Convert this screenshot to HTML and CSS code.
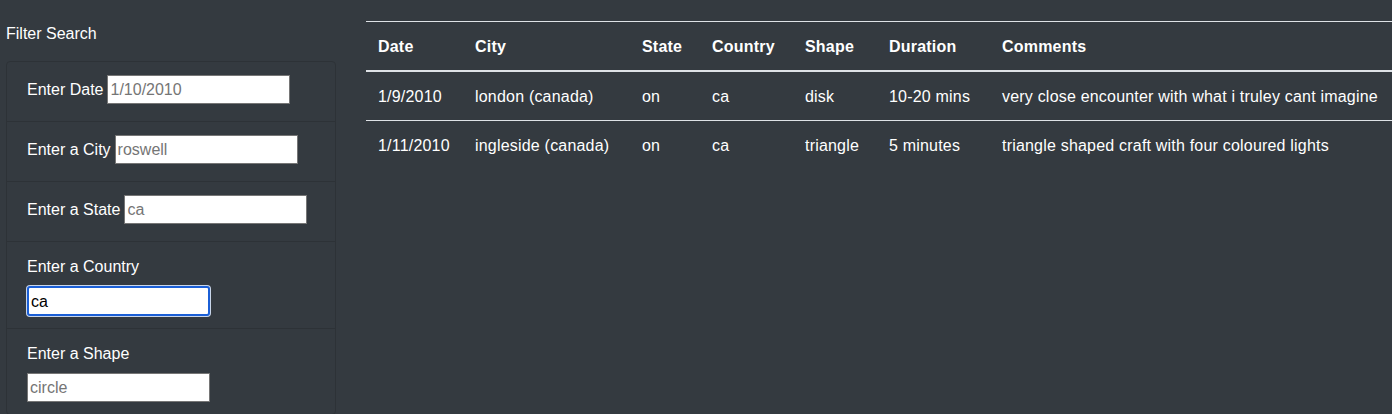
FILE: index.html
```html
<!DOCTYPE html>
<html lang="en">
<head>
<meta charset="utf-8">
<title>UFO Sightings</title>
<link rel="stylesheet" href="styles.css">
</head>
<body>
<div class="page">
  <aside class="sidebar">
    <p class="filter-title">Filter Search</p>
    <ul class="filters">
      <li class="filter inline">
        <label class="filter-label" for="datetime">Enter Date</label>
        <input class="filter-input" id="datetime" type="text" placeholder="1/10/2010">
      </li>
      <li class="filter inline">
        <label class="filter-label" for="city">Enter a City</label>
        <input class="filter-input" id="city" type="text" placeholder="roswell">
      </li>
      <li class="filter inline">
        <label class="filter-label" for="state">Enter a State</label>
        <input class="filter-input" id="state" type="text" placeholder="ca">
      </li>
      <li class="filter stacked">
        <label class="filter-label" for="country">Enter a Country</label>
        <input class="filter-input focused" id="country" type="text" value="ca">
      </li>
      <li class="filter stacked">
        <label class="filter-label" for="shape">Enter a Shape</label>
        <input class="filter-input" id="shape" type="text" placeholder="circle">
      </li>
    </ul>
  </aside>
  <main class="results">
    <table class="ufo-table">
      <colgroup>
        <col class="c-date"><col class="c-city"><col class="c-state"><col class="c-country"><col class="c-shape"><col class="c-duration"><col class="c-comments">
      </colgroup>
      <thead>
        <tr>
          <th>Date</th><th>City</th><th>State</th><th>Country</th><th>Shape</th><th>Duration</th><th>Comments</th>
        </tr>
      </thead>
      <tbody>
        <tr>
          <td>1/9/2010</td><td>london (canada)</td><td>on</td><td>ca</td><td>disk</td><td>10-20 mins</td><td>very close encounter with what i truley cant imagine</td>
        </tr>
        <tr>
          <td>1/11/2010</td><td>ingleside (canada)</td><td>on</td><td>ca</td><td>triangle</td><td>5 minutes</td><td>triangle shaped craft with four coloured lights</td>
        </tr>
      </tbody>
    </table>
  </main>
</div>
</body>
</html>
```
FILE: styles.css
```css
html, body {
  margin: 0;
  padding: 0;
  background: #343a40;
  overflow: hidden;
}
body {
  font-family: "Liberation Sans", Arial, sans-serif;
  font-size: 16px;
  line-height: 24px;
  letter-spacing: 0.2px;
  color: #fff;
}
.page {
  display: grid;
  grid-template-columns: 330px 1fr;
  column-gap: 30px;
  padding: 21px 0 0 6px;
}
.filter-title {
  margin: 0 0 15px;
  padding-top: 1px;
  letter-spacing: 0;
}
.filters {
  list-style: none;
  margin: 0;
  padding: 0;
  border: 1px solid #2d3237;
  border-radius: 4px;
}
.filter {
  padding: 0 19px 0 20px;
}
.filter + .filter {
  border-top: 1px solid #2d3237;
}
.filter.inline {
  display: flex;
  align-items: center;
  gap: 4px;
  padding-top: 13px;
  padding-bottom: 17px;
}
.filter.stacked {
  display: flex;
  flex-direction: column;
  align-items: flex-start;
  gap: 7px;
  padding-top: 12px;
  padding-bottom: 12px;
}
.filter.stacked .filter-label {
  padding-top: 1px;
}
.filter-label {
  white-space: nowrap;
  letter-spacing: 0;
}
.filter-input {
  box-sizing: border-box;
  width: 183px;
  height: 29px;
  margin: 0;
  padding: 1px 2px 0;
  border: 1px solid #767676;
  background: #fff;
  font-family: "Liberation Sans", Arial, sans-serif;
  font-size: 16px;
  letter-spacing: 0;
  color: #000;
  outline: none;
}
.filter-input::placeholder {
  color: #757575;
}
.filter-input.focused {
  height: 30px;
  border: 2px solid #1b5fd6;
  border-radius: 3px;
  padding-left: 2px;
  box-shadow: 0 0 0 1px #c9d6ea;
}
.ufo-table {
  width: 100%;
  table-layout: fixed;
  border-collapse: collapse;
}
.c-date { width: 97px; }
.c-city { width: 167px; }
.c-state { width: 70px; }
.c-country { width: 93px; }
.c-shape { width: 84px; }
.c-duration { width: 113px; }
.ufo-table th,
.ufo-table td {
  padding: 13px 12px 11px;
  text-align: left;
  vertical-align: top;
  border-top: 1px solid #dee2e6;
  white-space: nowrap;
}
.ufo-table th {
  font-weight: bold;
  border-bottom: 2px solid #dee2e6;
}
.ufo-table thead + tbody tr:first-child td {
  border-top: 0;
}
```
